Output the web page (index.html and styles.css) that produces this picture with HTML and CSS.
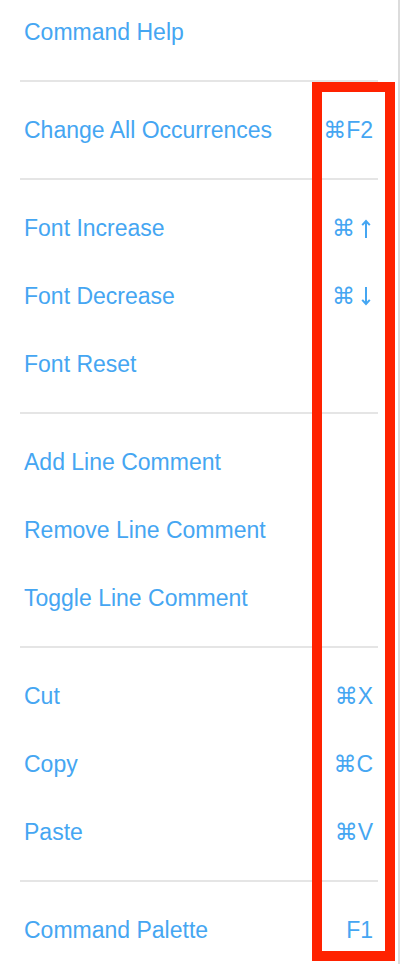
FILE: index.html
```html
<!DOCTYPE html>
<html>
<head>
<meta charset="utf-8">
<link rel="stylesheet" href="styles.css">
</head>
<body>
<div class="panel">
  <div class="group group-first">
    <div class="item item-top"><span class="label">Command Help</span></div>
  </div>
  <div class="group">
    <div class="item"><span class="label">Change All Occurrences</span><span class="key">⌘F2</span></div>
  </div>
  <div class="group">
    <div class="item"><span class="label">Font Increase</span><span class="key">⌘<svg class="arrow" viewBox="0 0 10 19" width="10" height="19"><path d="M5 2 V19 M1.2 6.2 L5 2 L8.8 6.2" /></svg></span></div>
    <div class="item"><span class="label">Font Decrease</span><span class="key">⌘<svg class="arrow" viewBox="0 0 10 19" width="10" height="19"><path d="M5 0 V17 M1.2 12.8 L5 17 L8.8 12.8" /></svg></span></div>
    <div class="item"><span class="label">Font Reset</span></div>
  </div>
  <div class="group">
    <div class="item"><span class="label">Add Line Comment</span></div>
    <div class="item"><span class="label">Remove Line Comment</span></div>
    <div class="item"><span class="label">Toggle Line Comment</span></div>
  </div>
  <div class="group">
    <div class="item"><span class="label">Cut</span><span class="key">⌘X</span></div>
    <div class="item"><span class="label">Copy</span><span class="key">⌘C</span></div>
    <div class="item"><span class="label">Paste</span><span class="key">⌘V</span></div>
  </div>
  <div class="group">
    <div class="item"><span class="label">Command Palette</span><span class="key">F1</span></div>
  </div>
  <div class="highlight"></div>
</div>
</body>
</html>
```
FILE: styles.css
```css
html, body {
  margin: 0;
  padding: 0;
  background: #ffffff;
}
body {
  width: 400px;
  height: 964px;
  overflow: hidden;
  font-family: "Liberation Sans", "DejaVu Sans", Arial, sans-serif;
}
.panel {
  position: relative;
  box-sizing: border-box;
  width: 400px;
  height: 964px;
  padding: 0 20px;
  border-right: 2px solid #dcdcdc;
  display: flex;
  flex-direction: column;
}
.group {
  padding: 14px 0;
  border-top: 2px solid #e5e5e5;
}
.group-first {
  padding: 0 0 16px;
  border-top: none;
}
.item {
  height: 68px;
  display: flex;
  align-items: center;
  justify-content: space-between;
  padding: 0 5px 0 4px;
  color: #45a6f2;
  font-size: 23px;
}
.item-top {
  height: 64px;
}
.key {
  display: flex;
  align-items: center;
  font-family: "Liberation Sans", "DejaVu Sans", sans-serif;
}
.arrow {
  margin-left: 6px;
  margin-right: 2px;
  fill: none;
  stroke: #45a6f2;
  stroke-width: 2;
}
.highlight {
  position: absolute;
  left: 312px;
  top: 82px;
  width: 83px;
  height: 879px;
  box-sizing: border-box;
  border: 10px solid #ff2200;
}
```
